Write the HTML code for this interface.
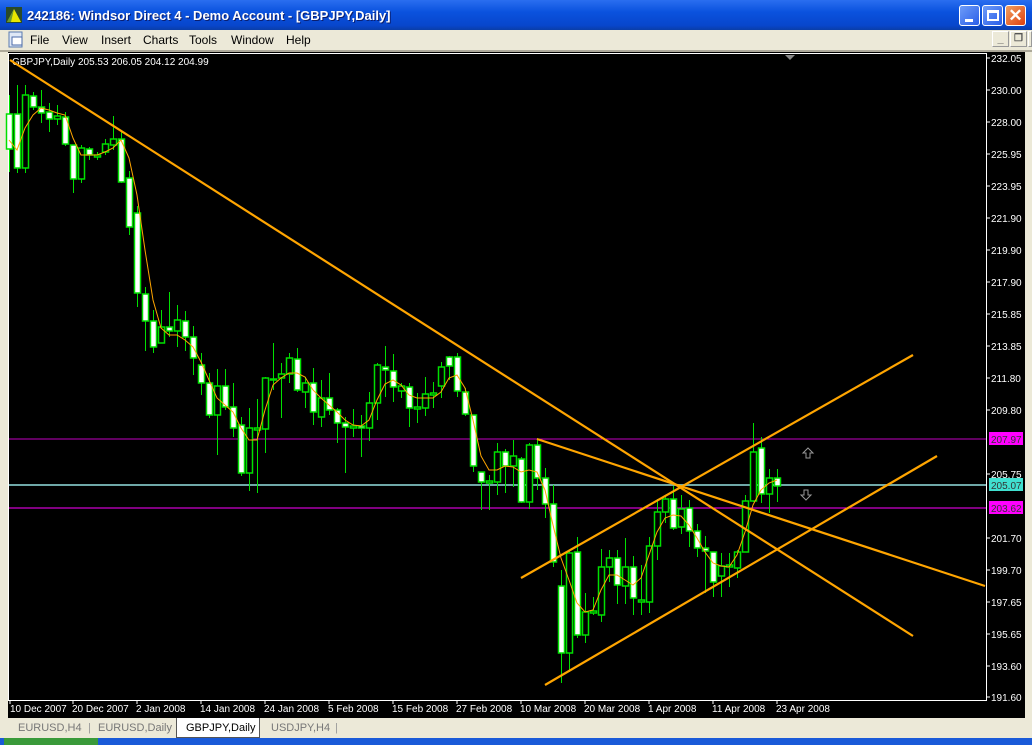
<!DOCTYPE html>
<html><head><meta charset="utf-8"><style>
*{margin:0;padding:0;box-sizing:border-box}
body{width:1032px;height:745px;overflow:hidden;background:#ece9d8;font-family:Tahoma,"Liberation Sans",sans-serif;position:relative}
#title{position:absolute;left:0;top:0;width:1032px;height:30px;background:linear-gradient(#2a6ef0,#0a52de 40%,#0846cc 85%,#0a3ea8);color:#fff;font:bold 13px "Liberation Sans",sans-serif}
#title span{position:absolute;left:27px;top:8px;text-shadow:1px 1px #0a1e6e}
.wb{position:absolute;top:5px;width:21px;height:21px;border:1px solid #fff;border-radius:3px;background:linear-gradient(135deg,#6e9cf8,#2a5ee8)}
#menu{position:absolute;left:0;top:30px;width:1032px;height:20px;background:#ece9d8;font:12px "Liberation Sans",sans-serif}
#menu span{position:absolute;top:3px}
.mb{position:absolute;top:1px;width:17px;height:16px;border:1px solid #fff;border-right-color:#999;border-bottom-color:#999;color:#555;font:bold 11px "Liberation Sans";text-align:center;line-height:14px}
#chart{position:absolute;left:8px;top:52px;width:1017px;height:666px;background:#000}
#tabs{position:absolute;left:0;top:718px;width:1032px;height:20px;background:#ece9d8;font:11px "Liberation Sans",sans-serif;color:#777}
#tabs span{position:absolute;top:4px}
</style></head><body>
<div id="title"><svg style="position:absolute;left:6px;top:7px" width="16" height="16"><rect width="16" height="16" fill="#2a4a2a"/><polygon points="8,2 15,15 1,15" fill="#e8e800"/><polygon points="8,2 1,15 5,15" fill="#6a9a30"/></svg><span>242186: Windsor Direct 4 - Demo Account - [GBPJPY,Daily]</span>
<div class="wb" style="left:959px"><div style="position:absolute;left:5px;top:13px;width:8px;height:3px;background:#fff"></div></div>
<div class="wb" style="left:982px"><div style="position:absolute;left:4px;top:4px;width:12px;height:11px;border:2px solid #fff;border-top-width:3px"></div></div>
<div class="wb" style="left:1005px;background:linear-gradient(135deg,#f0a060,#e04010);color:#fff;font:bold 17px 'Liberation Sans';text-align:center;line-height:20px">✕</div>
</div>
<div id="menu"><svg style="position:absolute;left:8px;top:1px" width="16" height="17"><rect x="1" y="1" width="13" height="15" fill="#dfe8f6" stroke="#5a7ab0"/><rect x="4" y="6" width="10" height="8" fill="#fff" stroke="#4a6aa8"/></svg>
<span style="left:30px">File</span><span style="left:62px">View</span><span style="left:101px">Insert</span><span style="left:143px">Charts</span><span style="left:189px">Tools</span><span style="left:231px">Window</span><span style="left:286px">Help</span>
<div class="mb" style="left:992px">_</div><div class="mb" style="left:1010px;font-size:10px">❐</div><div class="mb" style="left:1028px;width:4px"></div>
</div>
<div style="position:absolute;left:0;top:50px;width:1032px;height:2px;background:#aca899"></div>
<div id="chart"></div>
<svg style="position:absolute;left:0;top:0" width="1032" height="745" font-family="Liberation Sans,sans-serif" font-size="10">
<rect x="8.5" y="53.5" width="978" height="647" fill="none" stroke="#fff"/>
<text x="12" y="65" fill="#fff" font-size="10">GBPJPY,Daily  205.53 206.05 204.12 204.99</text>
<polygon points="785,55 795,55 790,60" fill="#888"/>
<line x1="9" y1="439" x2="986" y2="439" stroke="#c000c0"/>
<line x1="9" y1="508" x2="986" y2="508" stroke="#ff00ff"/>
<line x1="9" y1="485" x2="986" y2="485" stroke="#6fa8a8" stroke-width="2"/>
<g stroke="#00ff00" stroke-width="1" id="c"></g>
<g id="cand" stroke="#00e000"></g>
<polyline fill="none" stroke="#ffa500" stroke-width="1" points="9,140 17,150 25,128 33,115 41,108 49,110 57,113 65,115 73,138 81,155 89,155 97,155 105,152 113,148 121,140 129,158 137,195 145,250 153,300 161,328 169,335 177,335 185,340 193,347 201,362 209,380 217,398 225,405 233,412 241,428 249,440 257,440 265,410 273,385 281,378 289,373 297,373 305,377 313,390 321,398 329,405 337,412 345,420 353,425 361,426 369,420 377,400 385,384 393,380 401,385 409,395 417,398 425,398 433,398 441,392 449,378 457,375 465,388 473,420 481,456 489,470 497,470 505,466 513,467 521,472 529,470 537,472 545,490 553,525 561,558 569,580 577,603 585,612 593,610 601,590 609,575 617,575 625,580 633,585 641,578 649,555 657,532 665,518 673,515 681,516 689,525 697,538 705,552 713,563 721,566 729,567 737,555 745,532 753,505 761,490 769,483 777,480"/>
<g stroke="#ffa500" stroke-width="2.2">
<line x1="10" y1="60" x2="913" y2="636"/>
<line x1="537" y1="439" x2="985" y2="586"/>
<line x1="521" y1="578" x2="913" y2="355"/>
<line x1="545" y1="685" x2="937" y2="456"/>
</g>
<polygon points="808,448 813,453 810,453 810,458 806,458 806,453 803,453" fill="none" stroke="#999"/>
<polygon points="806,500 811,495 808,495 808,490 804,490 804,495 801,495" fill="none" stroke="#999"/>
<g fill="#fff" font-size="10">
<text x="991" y="62">232.05</text><text x="991" y="94">230.00</text><text x="991" y="126">228.00</text><text x="991" y="158">225.95</text><text x="991" y="190">223.95</text><text x="991" y="222">221.90</text><text x="991" y="254">219.90</text><text x="991" y="286">217.90</text><text x="991" y="318">215.85</text><text x="991" y="350">213.85</text><text x="991" y="382">211.80</text><text x="991" y="414">209.80</text><text x="991" y="478">205.75</text><text x="991" y="542">201.70</text><text x="991" y="574">199.70</text><text x="991" y="606">197.65</text><text x="991" y="638">195.65</text><text x="991" y="670">193.60</text><text x="991" y="701">191.60</text>
</g>
<g stroke="#fff"><line x1="986" y1="58" x2="990" y2="58"/><line x1="986" y1="90" x2="990" y2="90"/><line x1="986" y1="122" x2="990" y2="122"/><line x1="986" y1="154" x2="990" y2="154"/><line x1="986" y1="186" x2="990" y2="186"/><line x1="986" y1="218" x2="990" y2="218"/><line x1="986" y1="250" x2="990" y2="250"/><line x1="986" y1="282" x2="990" y2="282"/><line x1="986" y1="314" x2="990" y2="314"/><line x1="986" y1="346" x2="990" y2="346"/><line x1="986" y1="378" x2="990" y2="378"/><line x1="986" y1="410" x2="990" y2="410"/><line x1="986" y1="474" x2="990" y2="474"/><line x1="986" y1="538" x2="990" y2="538"/><line x1="986" y1="570" x2="990" y2="570"/><line x1="986" y1="602" x2="990" y2="602"/><line x1="986" y1="634" x2="990" y2="634"/><line x1="986" y1="666" x2="990" y2="666"/><line x1="986" y1="697" x2="990" y2="697"/></g>
<rect x="989" y="432" width="34" height="13" fill="#ff00ff"/><text x="991" y="443" fill="#333">207.97</text>
<rect x="989" y="478" width="34" height="13" fill="#40e0d0"/><text x="991" y="489" fill="#333">205.07</text>
<rect x="989" y="501" width="34" height="13" fill="#ff00ff"/><text x="991" y="512" fill="#333">203.62</text>
<g fill="#fff" font-size="10">
<text x="10" y="712">10 Dec 2007</text><text x="72" y="712">20 Dec 2007</text><text x="136" y="712">2 Jan 2008</text><text x="200" y="712">14 Jan 2008</text><text x="264" y="712">24 Jan 2008</text><text x="328" y="712">5 Feb 2008</text><text x="392" y="712">15 Feb 2008</text><text x="456" y="712">27 Feb 2008</text><text x="520" y="712">10 Mar 2008</text><text x="584" y="712">20 Mar 2008</text><text x="648" y="712">1 Apr 2008</text><text x="712" y="712">11 Apr 2008</text><text x="776" y="712">23 Apr 2008</text>
</g>
<g stroke="#fff"><line x1="10" y1="700" x2="10" y2="704"/><line x1="73" y1="700" x2="73" y2="704"/><line x1="137" y1="700" x2="137" y2="704"/><line x1="201" y1="700" x2="201" y2="704"/><line x1="265" y1="700" x2="265" y2="704"/><line x1="329" y1="700" x2="329" y2="704"/><line x1="393" y1="700" x2="393" y2="704"/><line x1="457" y1="700" x2="457" y2="704"/><line x1="521" y1="700" x2="521" y2="704"/><line x1="585" y1="700" x2="585" y2="704"/><line x1="649" y1="700" x2="649" y2="704"/><line x1="713" y1="700" x2="713" y2="704"/><line x1="777" y1="700" x2="777" y2="704"/></g>
</svg>
<div id="tabs"><span style="left:18px">EURUSD,H4</span><span style="left:88px;color:#999">|</span><span style="left:98px">EURUSD,Daily</span>
<div style="position:absolute;left:176px;top:0;width:84px;height:20px;background:#fff;border:1px solid #555;border-top:none"></div><span style="left:186px;color:#000">GBPJPY,Daily</span><span style="left:271px">USDJPY,H4</span><span style="left:335px;color:#999">|</span></div>
<div style="position:absolute;left:0;top:738px;width:1032px;height:7px;background:#1a5ad8"></div>
<div style="position:absolute;left:4px;top:738px;width:94px;height:7px;background:#3a9a3a"></div>
<script>
var d=[[9,95,172,114,149,1],[17,85,173,114,168,1],[25,85,173,95,168,0],[33,92,110,96,107,1],[41,90,123,107,113,1],[49,103,132,112,119,1],[57,105,125,116,119,0],[65,112,146,117,144,1],[73,145,193,145,179,1],[81,145,183,148,179,0],[89,147,160,149,155,1],[97,152,160,155,157,0],[105,139,155,144,152,0],[113,116,150,139,145,0],[121,132,183,139,182,1],[129,171,235,178,227,1],[137,206,307,213,293,1],[145,287,351,294,321,1],[153,310,353,321,347,1],[161,310,343,327,343,0],[169,292,337,327,331,1],[177,305,347,320,331,0],[185,311,351,321,337,1],[193,326,375,337,358,1],[201,353,395,365,383,1],[209,373,418,383,415,1],[217,369,455,386,415,0],[225,369,410,386,407,1],[233,383,437,407,428,1],[241,417,476,425,473,1],[249,408,491,428,473,0],[257,399,493,428,430,0],[265,377,453,378,429,0],[273,343,390,379,380,0],[281,363,418,374,378,0],[289,353,383,358,374,0],[297,348,392,359,390,1],[305,377,408,383,392,0],[313,368,425,383,412,1],[321,380,427,398,417,0],[329,373,415,398,410,1],[337,408,443,410,423,1],[345,417,473,423,427,1],[353,409,437,426,428,0],[361,415,457,426,428,1],[369,392,441,403,428,0],[377,363,420,365,403,0],[385,346,397,367,370,1],[393,354,402,371,387,1],[401,383,398,386,391,0],[409,383,427,387,408,1],[417,393,423,407,409,0],[425,377,416,394,408,0],[433,382,408,393,395,0],[441,362,398,367,386,0],[449,356,380,357,366,1],[457,353,397,357,391,1],[465,388,416,392,414,1],[473,415,472,415,466,1],[481,472,510,472,482,1],[489,475,510,481,483,0],[497,443,495,452,482,0],[505,449,493,452,466,1],[513,440,487,456,466,0],[521,457,503,459,502,1],[529,443,509,445,502,0],[537,438,490,445,478,1],[545,468,518,478,504,1],[553,485,567,504,562,1],[561,570,683,586,653,1],[569,550,672,553,653,0],[577,537,638,552,635,1],[585,593,643,612,635,0],[593,597,615,611,613,0],[601,549,622,567,615,0],[609,550,582,558,567,0],[617,550,604,558,585,1],[625,538,604,567,586,0],[633,556,615,567,598,1],[641,565,615,600,602,0],[649,537,613,546,602,0],[657,499,560,512,546,0],[665,495,523,499,512,0],[673,486,530,499,528,1],[681,495,534,509,527,0],[689,500,547,508,531,1],[697,524,557,531,548,1],[705,536,593,548,551,1],[713,552,597,552,582,1],[721,553,597,566,576,0],[729,553,587,565,567,0],[737,550,578,552,568,0],[745,495,552,501,552,0],[753,423,502,452,501,0],[761,437,503,448,494,1],[769,469,513,478,494,0],[777,469,502,478,486,1]];
var s='';d.forEach(function(c){var x=c[0];s+='<line x1="'+(x+.5)+'" y1="'+c[1]+'" x2="'+(x+.5)+'" y2="'+c[2]+'"/>';var h=Math.max(1,c[4]-c[3]);s+='<rect x="'+(x-2.5)+'" y="'+c[3]+'" width="6" height="'+h+'" fill="'+(c[5]?'#fff':'#000')+'" stroke-width="1.5"/>';});
document.getElementById('cand').innerHTML=s;
</script>
</body></html>
